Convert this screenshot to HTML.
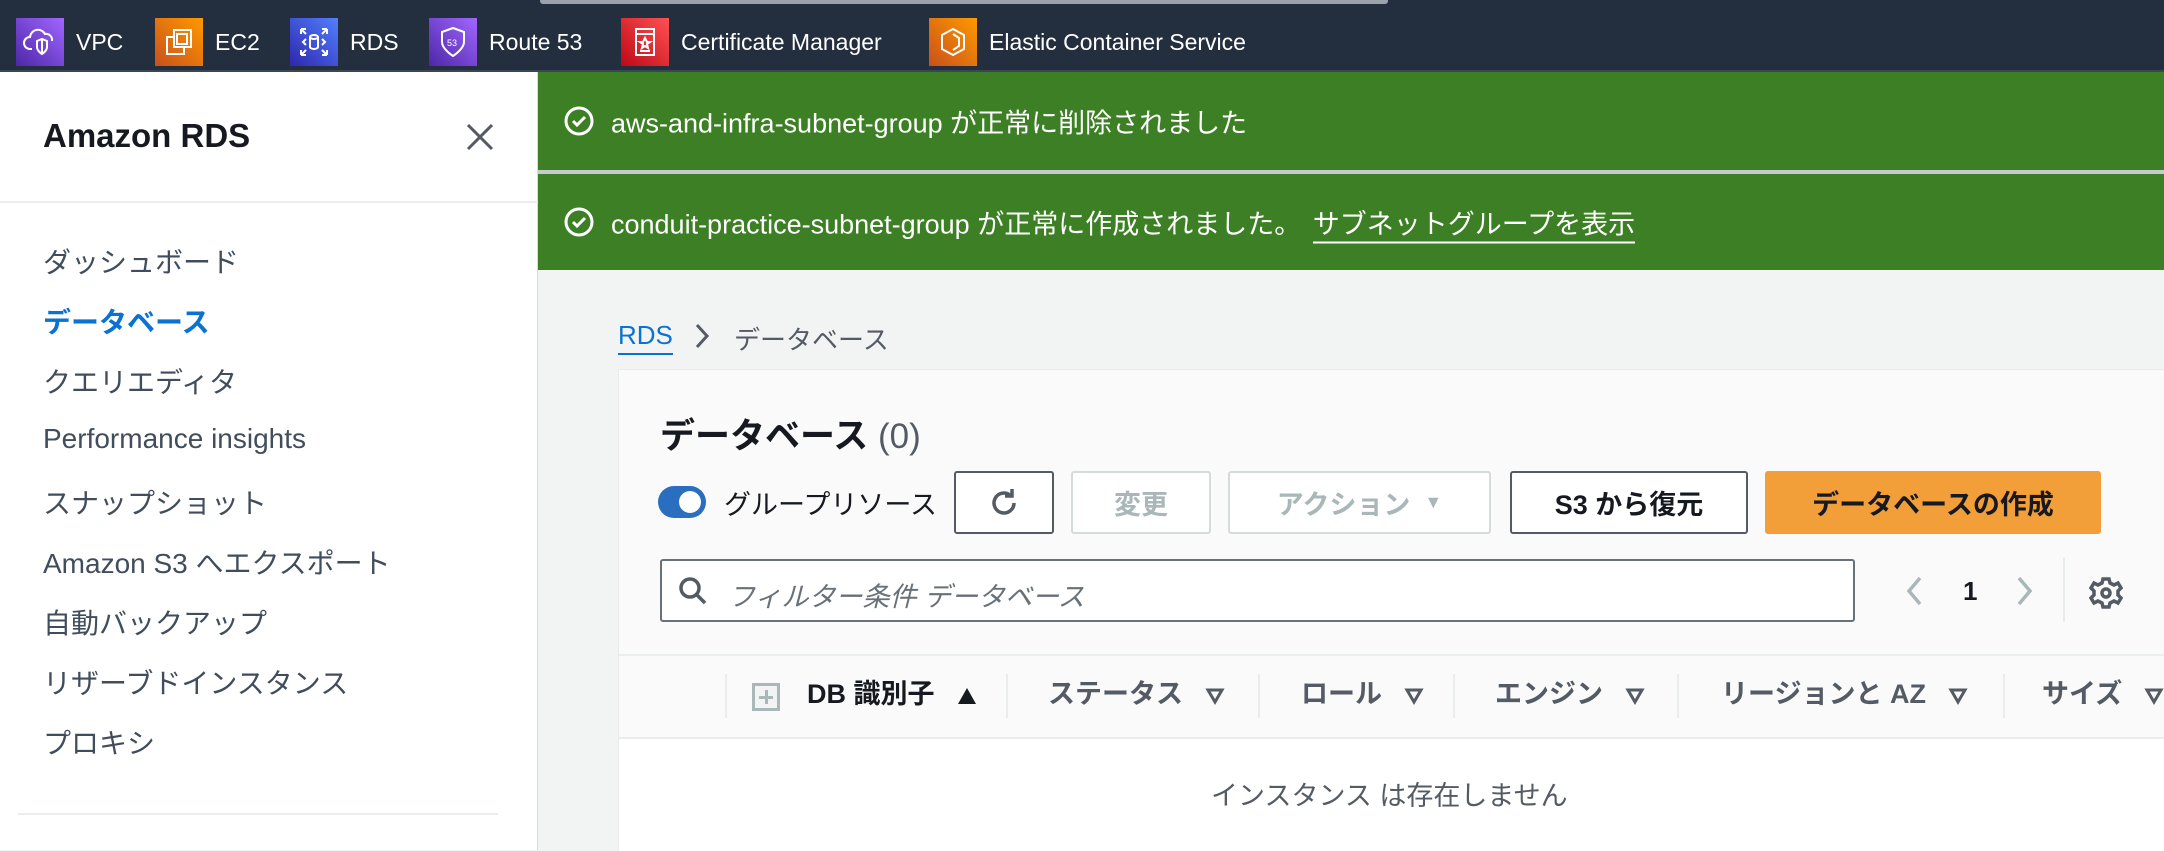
<!DOCTYPE html>
<html><head><meta charset="utf-8">
<style>
*{box-sizing:border-box;margin:0;padding:0}
body{width:2164px;height:850px;overflow:hidden;background:#f2f3f3;font-family:"Liberation Sans","Noto Sans CJK JP",sans-serif;position:relative;color:#16191f}
.abs{position:absolute}
.nav{left:0;top:0;width:2164px;height:72px;background:#232f3e;border-bottom:2px solid #3b4652}
.topbar{left:540px;top:0;width:848px;height:4px;background:#9aa2ab;border-radius:0 0 3px 3px}
.ni{position:absolute;top:18px;height:48px;display:flex;align-items:center;color:#fff;font-size:23px}
.ic{width:48px;height:48px;margin-right:12px;display:flex;align-items:center;justify-content:center}
.side{left:0;top:72px;width:538px;height:778px;background:#fff;border-right:1px solid #d5dbdb}
.side h1{position:absolute;left:43px;top:45px;font-size:33px;font-weight:bold;color:#16191f}
.sl{position:absolute;left:43px;font-size:28px;color:#414d5c;white-space:nowrap}
.flash{left:538px;width:1626px;background:#3d7f24;color:#fff;font-size:27px}
.flash .t{position:absolute;left:73px;top:50%;transform:translateY(-50%);white-space:nowrap}
.flash svg{position:absolute;left:25px;top:50%;transform:translateY(-50%)}
.cont{left:618px;top:369px;width:1546px;height:481px;background:#fafafa;border-left:1px solid #e9ebed;border-top:1px solid #e9ebed}
.btn{position:absolute;top:101px;height:63px;border:2px solid #545b64;border-radius:3px;background:#fff;display:flex;align-items:center;justify-content:center;font-size:27px;font-weight:bold;color:#545b64}
.dis{border-color:#d5dbdb;color:#aab7b8}
.th{position:absolute;top:302px;font-size:27px;font-weight:bold;color:#545b64;white-space:nowrap}
.dv{position:absolute;top:304px;width:2px;height:44px;background:#eaeded}
.tri{display:inline-block;margin-left:22px;vertical-align:middle}
</style></head><body>
<div class="abs nav"></div>
<div class="abs topbar"></div>

<div class="ni" style="left:16px"><div class="ic" style="background:linear-gradient(45deg,#4d27a8,#a166ff)"><svg width="34" height="34" viewBox="0 0 34 34" fill="none" stroke="#fff" stroke-width="2"><path d="M9 24H7a6 6 0 0 1 0-12 8 8 0 0 1 15-3 6 6 0 0 1 7 7"/><path d="M14 16l5-2 5 2v6c0 4-5 7-5 7s-5-3-5-7z"/><path d="M19 14v15"/></svg></div>VPC</div>
<div class="ni" style="left:155px"><div class="ic" style="background:linear-gradient(45deg,#c8511b,#ff9900)"><svg width="34" height="34" viewBox="0 0 34 34" fill="none" stroke="#fff" stroke-width="2"><rect x="12" y="5" width="17" height="17"/><path d="M12 12H5v17h17v-7"/><rect x="15" y="9" width="10" height="10"/></svg></div>EC2</div>
<div class="ni" style="left:290px"><div class="ic" style="background:linear-gradient(45deg,#2e27ad,#527fff)"><svg width="34" height="34" viewBox="0 0 34 34" fill="none" stroke="#fff" stroke-width="2"><ellipse cx="17" cy="12" rx="4" ry="2"/><path d="M13 12v10c0 1 2 2 4 2s4-1 4-2V12"/><path d="M4 4l5 5M4 4v5M4 4h5M30 4l-5 5M30 4v5M30 4h-5M4 30l5-5M4 30v-5M4 30h5M30 30l-5-5M30 30v-5M30 30h-5M9 14l-3 3 3 3M25 14l3 3-3 3"/></svg></div>RDS</div>
<div class="ni" style="left:429px"><div class="ic" style="background:linear-gradient(45deg,#4d27a8,#a166ff)"><svg width="34" height="34" viewBox="0 0 34 34" fill="none" stroke="#fff" stroke-width="2"><path d="M17 3l11 4v10c0 7-11 14-11 14S6 24 6 17V7z"/><text x="11" y="21" font-size="9" fill="#fff" stroke="none" font-family="Liberation Sans">53</text></svg></div>Route 53</div>
<div class="ni" style="left:621px"><div class="ic" style="background:linear-gradient(45deg,#bd0816,#ff5252)"><svg width="34" height="34" viewBox="0 0 34 34" fill="none" stroke="#fff" stroke-width="2"><rect x="8" y="4" width="18" height="26"/><path d="M8 9h18M17 13l2 4h3l-3 2 1 4-3-2-3 2 1-4-3-2h3zM12 26h10"/></svg></div>Certificate Manager</div>
<div class="ni" style="left:929px"><div class="ic" style="background:linear-gradient(45deg,#c8511b,#ff9900)"><svg width="34" height="34" viewBox="0 0 34 34" fill="none" stroke="#fff" stroke-width="2"><path d="M17 4l11 6v14l-11 6-11-6V10z"/><path d="M17 9l6 4v8l-6 4"/></svg></div>Elastic Container Service</div>

<div class="abs side">
<h1>Amazon RDS</h1>
<svg class="abs" style="left:465px;top:50px" width="30" height="30" viewBox="0 0 30 30" stroke="#545b64" stroke-width="3"><path d="M3 3l24 24M27 3L3 27"/></svg>
<div class="abs" style="left:0;top:129px;width:538px;height:2px;background:#eaeded"></div>
<div class="sl" style="top:169px">ダッシュボード</div>
<div class="sl" style="top:229px;color:#0972d3;font-weight:bold">データベース</div>
<div class="sl" style="top:289px">クエリエディタ</div>
<div class="sl" style="top:351px">Performance insights</div>
<div class="sl" style="top:410px">スナップショット</div>
<div class="sl" style="top:470px">Amazon S3 へエクスポート</div>
<div class="sl" style="top:530px">自動バックアップ</div>
<div class="sl" style="top:590px">リザーブドインスタンス</div>
<div class="sl" style="top:650px">プロキシ</div>
<div class="abs" style="left:18px;top:741px;width:480px;height:2px;background:#eaeded"></div>
</div>

<div class="abs flash" style="top:72px;height:98px"><svg width="32" height="32" viewBox="0 0 32 32" fill="none" stroke="#fff" stroke-width="3"><circle cx="16" cy="16" r="13"/><path d="M10 16l4 4 8-8"/></svg><div class="t">aws-and-infra-subnet-group が正常に削除されました</div></div>
<div class="abs" style="left:538px;top:170px;width:1626px;height:4px;background:#c6cbcf"></div>
<div class="abs flash" style="top:174px;height:96px"><svg width="32" height="32" viewBox="0 0 32 32" fill="none" stroke="#fff" stroke-width="3"><circle cx="16" cy="16" r="13"/><path d="M10 16l4 4 8-8"/></svg><div class="t">conduit-practice-subnet-group が正常に作成されました。 <span style="border-bottom:2px solid #fff;padding-bottom:2px;margin-left:4px">サブネットグループを表示</span></div></div>

<div class="abs" style="left:618px;top:320px;font-size:26px;color:#0972d3;border-bottom:2px solid #0972d3;padding-bottom:2px">RDS</div>
<svg class="abs" style="left:692px;top:322px" width="20" height="28" viewBox="0 0 20 28" fill="none" stroke="#545b64" stroke-width="3"><path d="M5 3l10 11L5 25"/></svg>
<div class="abs" style="left:734px;top:320px;font-size:26px;color:#545b64">データベース</div>

<div class="abs cont">
<div class="abs" style="left:41px;top:38px;font-size:35px;font-weight:bold">データベース <span style="font-weight:normal;color:#545b64">(0)</span></div>
<div class="abs" style="left:39px;top:116px;width:48px;height:32px;border-radius:16px;background:#2a6fbf"><div style="position:absolute;right:5px;top:5px;width:22px;height:22px;border-radius:50%;background:#fff"></div></div>
<div class="abs" style="left:105px;top:113px;font-size:27px;color:#16191f">グループリソース</div>
<div class="btn" style="left:335px;width:100px"><svg width="34" height="34" viewBox="0 0 34 34" fill="none" stroke="#545b64" stroke-width="3.5"><path d="M27 17a10 10 0 1 1-4-8"/><path d="M25 3v7h-7"/></svg></div>
<div class="btn dis" style="left:452px;width:140px">変更</div>
<div class="btn dis" style="left:609px;width:263px">アクション <span style="font-size:18px;margin-left:14px">▼</span></div>
<div class="btn" style="left:891px;width:238px;color:#16191f">S3 から復元</div>
<div class="btn" style="left:1146px;width:336px;background:#f29e39;border-color:#f29e39;color:#16191f">データベースの作成</div>
<div class="abs" style="left:41px;top:189px;width:1195px;height:63px;border:2px solid #687078;border-radius:3px;background:#fff">
<svg class="abs" style="left:16px;top:15px" width="30" height="30" viewBox="0 0 30 30" fill="none" stroke="#545b64" stroke-width="3.5"><circle cx="12" cy="12" r="9"/><path d="M19 19l8 8"/></svg>
<div class="abs" style="left:66px;top:14px;font-size:27px;color:#687078;font-style:italic">フィルター条件 データベース</div></div>
<svg class="abs" style="left:1285px;top:205px" width="20" height="32" viewBox="0 0 20 32" fill="none" stroke="#aab7b8" stroke-width="3.5"><path d="M16 3L5 16l11 13"/></svg>
<div class="abs" style="left:1344px;top:206px;font-size:26px;font-weight:bold">1</div>
<svg class="abs" style="left:1396px;top:205px" width="20" height="32" viewBox="0 0 20 32" fill="none" stroke="#aab7b8" stroke-width="3.5"><path d="M4 3l11 13L4 29"/></svg>
<div class="abs" style="left:1444px;top:188px;width:2px;height:64px;background:#eaeded"></div>
<svg class="abs" style="left:1470px;top:206px" width="34" height="34" viewBox="0 0 34 34" fill="none" stroke="#545b64" stroke-width="3.5"><path d="M14 3h6l1 4 4 2 4-2 3 5-3 3v4l3 3-3 5-4-2-4 2-1 4h-6l-1-4-4-2-4 2-3-5 3-3v-4l-3-3 3-5 4 2 4-2z"/><circle cx="17" cy="17" r="4"/></svg>
<div class="abs" style="left:0;top:284px;width:1546px;height:2px;background:#eaeded"></div>
<div class="abs" style="left:0;top:367px;width:1546px;height:114px;background:#fff;border-top:2px solid #eaeded"></div>
<div class="dv" style="left:106px"></div><div class="dv" style="left:387px"></div><div class="dv" style="left:639px"></div><div class="dv" style="left:834px"></div><div class="dv" style="left:1058px"></div><div class="dv" style="left:1384px"></div>
<div class="abs" style="left:133px;top:313px;width:28px;height:28px;border:3px solid #aab7b8;background:#f2f3f3"><div style="position:absolute;left:10px;top:4px;width:3px;height:14px;background:#aab7b8"></div><div style="position:absolute;left:4px;top:10px;width:14px;height:3px;background:#aab7b8"></div></div>
<div class="th" style="left:188px;color:#16191f">DB 識別子<svg class="tri" width="20" height="18" viewBox="0 0 20 18"><path d="M10 1l9 16H1z" fill="#16191f"/></svg></div>
<div class="th" style="left:429px">ステータス<svg class="tri" width="20" height="18" viewBox="0 0 20 18"><path d="M3 3h14L10 15z" fill="none" stroke="#545b64" stroke-width="3"/></svg></div>
<div class="th" style="left:682px">ロール<svg class="tri" width="20" height="18" viewBox="0 0 20 18"><path d="M3 3h14L10 15z" fill="none" stroke="#545b64" stroke-width="3"/></svg></div>
<div class="th" style="left:876px">エンジン<svg class="tri" width="20" height="18" viewBox="0 0 20 18"><path d="M3 3h14L10 15z" fill="none" stroke="#545b64" stroke-width="3"/></svg></div>
<div class="th" style="left:1102px">リージョンと AZ<svg class="tri" width="20" height="18" viewBox="0 0 20 18"><path d="M3 3h14L10 15z" fill="none" stroke="#545b64" stroke-width="3"/></svg></div>
<div class="th" style="left:1423px">サイズ<svg class="tri" width="20" height="18" viewBox="0 0 20 18"><path d="M3 3h14L10 15z" fill="none" stroke="#545b64" stroke-width="3"/></svg></div>
<div class="abs" style="left:592px;top:404px;font-size:27px;color:#545b64">インスタンス は存在しません</div>
</div>
</body></html>
